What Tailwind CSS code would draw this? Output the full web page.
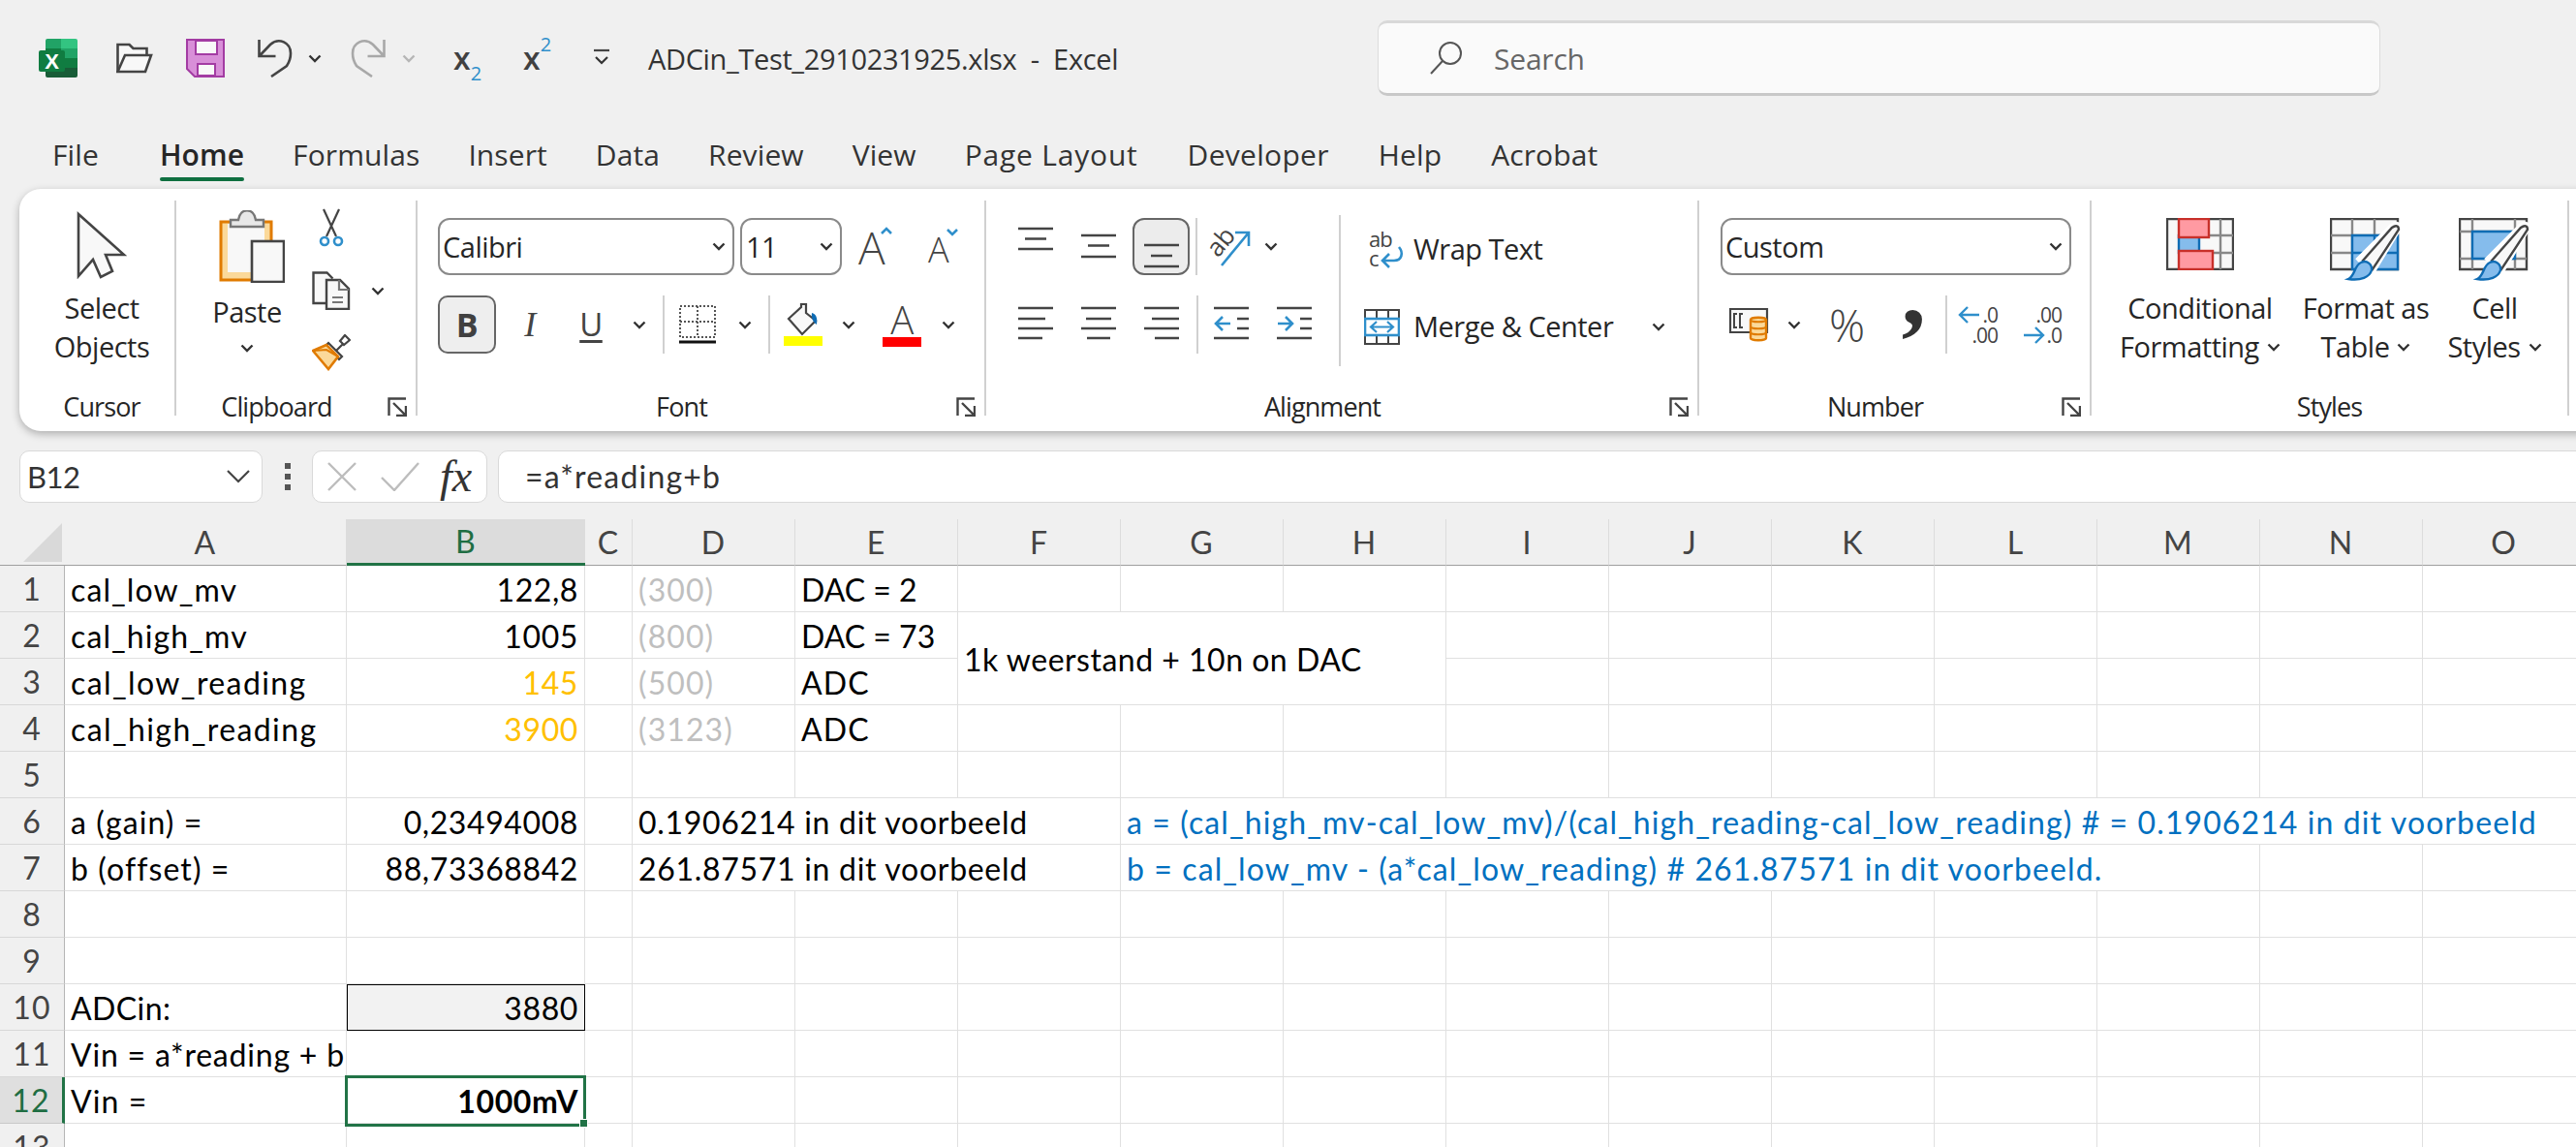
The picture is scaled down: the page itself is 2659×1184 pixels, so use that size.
<!DOCTYPE html>
<html lang="en">
<head>
  <meta charset="UTF-8">
  <title>ADCin_Test_2910231925.xlsx - Excel</title>
  <script src="https://cdn.jsdelivr.net/npm/@tailwindcss/browser@4"></script>
</head>
<body class="bg-[#f0f0f0]">

  <svg class="hidden">
    <symbol id="chev" viewBox="0 0 14 9"><path d="M1.5 1.5 7 7l5.5-5.5" fill="none" stroke="#333" stroke-width="2.4"/></symbol>
    <symbol id="launch" viewBox="0 0 20 20"><path d="M1.5 19V1.5H19M6 6l13 13M19 9v10H9" fill="none" stroke="#444" stroke-width="2.4"/></symbol>
  </svg>

  <div class="w-[2659px] h-[1184px] overflow-hidden flex flex-col bg-[#f0f0f0] text-[#262626] font-['Open_Sans',sans-serif]">

    <!-- Title bar -->
    <div class="h-[120px] shrink-0 flex items-center pl-[40px]">
      <svg class="w-[40px] h-[40px] overflow-visible" viewBox="0 0 40 40">
        <path d="M9 0h14v10H7V2a2 2 0 0 1 2-2z" fill="#21a366"/>
        <path d="M23 0h15a2 2 0 0 1 2 2v9H23z" fill="#33c481"/>
        <rect x="7" y="10" width="16" height="10" fill="#107c41"/>
        <rect x="23" y="10" width="17" height="10" fill="#21a366"/>
        <rect x="7" y="20" width="16" height="10" fill="#185c37"/>
        <rect x="23" y="20" width="17" height="10" fill="#107c41"/>
        <path d="M7 30h33v8a2 2 0 0 1-2 2H9a2 2 0 0 1-2-2z" fill="#185c37"/>
        <rect x="0" y="12" width="27" height="22" rx="2" fill="#107c41"/>
        <text x="13.5" y="31" text-anchor="middle" font-family="Liberation Sans" font-weight="700" font-size="22" fill="#fff">X</text>
      </svg>
      <svg class="ml-[40px] w-[38px] h-[32px]" viewBox="0 0 38 32">
        <path d="M1.5 30V2h12l4 4h14v7" fill="#f8f8f8" stroke="#444" stroke-width="2.6"/>
        <path d="M1.5 30 9 13h27l-6 17z" fill="#f8f8f8" stroke="#444" stroke-width="2.6"/>
      </svg>
      <svg class="ml-[34px] w-[40px] h-[40px]" viewBox="0 0 40 40">
        <path d="M1 1h38v38H9l-8-8z" fill="#d88fd8" stroke="#a33ca3" stroke-width="2"/>
        <rect x="10" y="2" width="22" height="14" fill="#f8f8f8" stroke="#a33ca3" stroke-width="2"/>
        <rect x="12" y="26" width="18" height="12" fill="#f8f8f8" stroke="#a33ca3" stroke-width="2"/>
      </svg>
      <svg class="ml-[34px] w-[36px] h-[40px]" viewBox="0 0 36 40">
        <path d="M1.500 1v17h17M1.500 18 13 6c9-8 21-2 21 9 0 6-2 10-4 13L14 39" fill="none" stroke="#444" stroke-width="2.6"/>
      </svg>
      <svg class="ml-[16px] w-[14px] h-[9px]"><use href="#chev"/></svg>
      <svg class="ml-[30px] w-[36px] h-[40px]" viewBox="0 0 36 40">
        <path d="M34.500 1v17h-17M34.500 18 23 6C14-2 2 4 2 15c0 6 2 10 4 13l16 11" fill="none" stroke="#a8a8a8" stroke-width="2.6"/>
      </svg>
      <svg class="ml-[17px] w-[14px] h-[9px] opacity-30"><use href="#chev"/></svg>
      <div class="ml-[39px] w-[27px] h-[40px] flex items-center text-[32px] font-semibold text-[#404040] leading-none">x<span class="text-[20px] text-[#2f8fcb] font-normal self-end leading-none mb-[-6px]">2</span></div>
      <div class="ml-[45px] w-[27px] h-[40px] flex items-center text-[32px] font-semibold text-[#404040] leading-none">x<span class="text-[20px] text-[#2f8fcb] font-normal self-start leading-none mt-[-4px]">2</span></div>
      <svg class="ml-[44px] w-[20px] h-[20px]" viewBox="0 0 20 20"><path d="M2 2h16" stroke="#444" stroke-width="2.2"/><path d="M4 9l6 6 6-6" fill="none" stroke="#333" stroke-width="2.2"/></svg>
      <div class="ml-[38px] mt-[2px] w-[520px] shrink-0 text-[29px] tracking-[-0.35px] whitespace-pre text-[#333]">ADCin_Test_2910231925.xlsx  -  Excel</div>
      <div class="ml-[233px] w-[1035px] shrink-0 h-[78px] flex items-center bg-[#fafafa] rounded-[10px] border border-[#dcdcdc] border-b-[3px] border-b-[#c8c8c8] border-t-[3px] border-t-[#d8d8d8]">
        <svg class="ml-[52px] w-[36px] h-[36px]" viewBox="0 0 36 36"><circle cx="22" cy="13" r="11" fill="none" stroke="#555" stroke-width="2"/><path d="M14 21 2 34" stroke="#555" stroke-width="2"/></svg>
        <span class="ml-[31px] text-[30px] tracking-[-0.2px] text-[#666]">Search</span>
      </div>
    </div>

    <!-- Tabs -->
    <div class="h-[75px] shrink-0 flex items-start pt-[18px] pl-[54px] gap-[50px] text-[30px] tracking-[0.1px] leading-[44px] text-[#333]">
      <span class="mr-[13px]">File</span>
      <span class="flex flex-col font-semibold text-[#262626]">Home<span class="h-[4px] mt-[1px] rounded-full bg-[#0f6f40]"></span></span>
      <span>Formulas</span>
      <span>Insert</span>
      <span>Data</span>
      <span>Review</span>
      <span>View</span>
      <span class="tracking-[0.8px]">Page Layout</span>
      <span class="ml-[1px] tracking-[0.3px]">Developer</span>
      <span class="ml-[1px]">Help</span>
      <span class="ml-[1px]">Acrobat</span>
    </div>

    <!-- Ribbon -->
    <div class="ml-[20px] w-[2680px] h-[250px] shrink-0 flex items-start bg-white rounded-[22px] shadow-[0_3px_8px_rgba(0,0,0,0.28)] text-[29px] tracking-[-0.5px] text-[#262626]">

      <!-- Cursor -->
      <div class="w-[162px] h-[222px] mt-[12px] shrink-0 flex flex-col border-r-2 border-[#d0d0d0]">
        <div class="h-[195px] shrink-0 pl-[10px] flex flex-col items-center leading-[40px]">
          <svg class="mt-[11px] w-[52px] h-[70px]" viewBox="0 0 52 70">
            <path d="M2 3 49 45H30l7 17-12 6-8-18L2 67z" fill="#f8f8f8" stroke="#444" stroke-width="2.6"/>
          </svg>
          <span class="mt-[10px]">Select</span>
          <span>Objects</span>
        </div>
        <div class="h-[36px] shrink-0 pl-[10px] text-center text-[27px] tracking-[-0.9px] leading-[36px]">Cursor</div>
      </div>

      <!-- Clipboard -->
      <div class="w-[249px] h-[222px] mt-[12px] shrink-0 flex flex-col border-r-2 border-[#d0d0d0]">
        <div class="h-[195px] shrink-0 flex">
          <div class="ml-[6px] w-[134px] flex flex-col items-center leading-[40px]">
            <svg class="mt-[10px] ml-[10px] w-[68px] h-[75px]" viewBox="0 0 68 75">
              <path d="M2 12h52v60H2z" fill="#fbd99a" stroke="#e07b00" stroke-width="3"/>
              <rect x="9" y="14" width="38" height="50" fill="#f8f8f8"/>
              <path d="M12 17v-7h8c2-13 16-13 18 0h8v7z" fill="#e8e8e8" stroke="#777" stroke-width="2.4"/>
              <rect x="34" y="32" width="33" height="42" fill="#f8f8f8" stroke="#444" stroke-width="2.6"/>
            </svg>
            <span class="mt-[10px]">Paste</span>
            <svg class="mt-[13px] w-[14px] h-[9px]"><use href="#chev"/></svg>
          </div>
          <div class="flex flex-col mt-[8px]">
            <svg class="ml-[7px] w-[26px] h-[40px]" viewBox="0 0 26 40">
              <path d="M5 1l13 28M21 1 8 29" fill="none" stroke="#444" stroke-width="2.2"/>
              <circle cx="6" cy="34" r="4" fill="#fff" stroke="#2f8fcb" stroke-width="2.6"/><circle cx="20" cy="34" r="4" fill="#fff" stroke="#2f8fcb" stroke-width="2.6"/>
            </svg>
            <div class="mt-[25px] flex items-center">
              <svg class="w-[40px] h-[40px]" viewBox="0 0 40 40">
                <path d="M14 33H1.500V1.500h14l6 6" fill="#f8f8f8" stroke="#444" stroke-width="2.4"/>
                <path d="M15 9h14l9 9v21H15z" fill="#f8f8f8" stroke="#444" stroke-width="2.4"/>
                <path d="M28 9v10h10M21 27h11M21 32h11" fill="none" stroke="#777" stroke-width="2.2"/>
              </svg>
              <svg class="ml-[21px] w-[14px] h-[9px]"><use href="#chev"/></svg>
            </div>
            <svg class="mt-[25px] w-[40px] h-[38px]" viewBox="0 0 40 38">
              <path d="M25 17l7-7-3-3 5-6 5 5-6 5-3-3" fill="#fff" stroke="#444" stroke-width="2.2"/>
              <path d="M17 9l14 14-3 3L14 12z" fill="#fff" stroke="#444" stroke-width="2.2"/>
              <path d="M15 11 1 17l16 19 10-13z" fill="#fbd99a" stroke="#e07b00" stroke-width="2.6"/>
              <path d="M1 17l14-1 12 7" fill="none" stroke="#e07b00" stroke-width="2.2"/>
            </svg>
          </div>
        </div>
        <div class="h-[36px] shrink-0 flex text-[27px] tracking-[-0.9px] leading-[36px]">
          <span class="flex-1 text-center">Clipboard</span>
          <div class="w-[40px] pt-[8px] pl-[11px]"><svg class="w-[20px] h-[20px]"><use href="#launch"/></svg></div>
        </div>
      </div>

      <!-- Font -->
      <div class="w-[587px] h-[222px] mt-[12px] shrink-0 flex flex-col border-r-2 border-[#d0d0d0]">
        <div class="h-[195px] shrink-0 pl-[21px] pt-[18px]">
          <div class="flex items-center h-[59px]">
            <div class="w-[306px] h-full flex items-center justify-between pl-[3px] pr-[7px] border-2 border-[#8a8a8a] rounded-[12px]">Calibri<svg class="w-[14px] h-[9px]"><use href="#chev"/></svg></div>
            <div class="ml-[6px] w-[105px] h-full flex items-center justify-between pl-[4px] pr-[7px] border-2 border-[#8a8a8a] rounded-[12px]">11<svg class="w-[14px] h-[9px]"><use href="#chev"/></svg></div>
            <div class="ml-[17px] w-[38px] h-[42px] flex items-start">
              <span class="text-[46px] leading-[42px] text-[#444] font-light">A</span>
              <svg class="ml-[-4px] shrink-0 w-[12px] h-[8px]" viewBox="0 0 12 8"><path d="M1 7l5-5 5 5" fill="none" stroke="#2f8fcb" stroke-width="2.6"/></svg>
            </div>
            <div class="ml-[34px] w-[34px] h-[42px] flex items-end">
              <span class="text-[36px] leading-[36px] text-[#444] font-light">A</span>
              <svg class="ml-[-2px] mb-[32px] shrink-0 w-[12px] h-[8px]" viewBox="0 0 12 8"><path d="M1 1l5 5 5-5" fill="none" stroke="#2f8fcb" stroke-width="2.6"/></svg>
            </div>
          </div>
          <div class="flex items-center h-[60px] mt-[21px]">
            <div class="w-[60px] h-full flex items-center justify-center bg-[#eeeeee] border-2 border-[#666] rounded-[10px] text-[34px] font-bold text-[#404040]">B</div>
            <div class="w-[70px] text-center text-[36px] italic text-[#444] font-['Liberation_Serif',serif]">I</div>
            <div class="w-[56px] text-center text-[33px] text-[#444] underline underline-offset-[4px]">U</div>
            <svg class="ml-[15px] w-[14px] h-[9px]"><use href="#chev"/></svg>
            <div class="ml-[17px] w-[2px] h-full bg-[#d0d0d0]"></div>
            <svg class="ml-[15px] w-[38px] h-[40px]" viewBox="0 0 38 40">
              <path d="M1 1h36v32H1zM19 1v32M1 17h36" fill="none" stroke="#555" stroke-width="2" stroke-dasharray="2 2"/>
              <path d="M0 38h38" stroke="#111" stroke-width="3"/>
            </svg>
            <svg class="ml-[23px] w-[14px] h-[9px]"><use href="#chev"/></svg>
            <div class="ml-[17px] w-[2px] h-full bg-[#d0d0d0]"></div>
            <svg class="ml-[14px] w-[40px] h-[44px]" viewBox="0 0 40 44">
              <path d="M5 16 18 4V1h5v9l10 8-14 14z" fill="#f8f8f8" stroke="#444" stroke-width="2.2"/>
              <path d="M29 10c4 1 6 4 5 12-3-2-6-6-5-12z" fill="#0f6cb4"/>
              <rect x="0" y="34" width="40" height="10" fill="#ffff00"/>
            </svg>
            <svg class="ml-[20px] w-[14px] h-[9px]"><use href="#chev"/></svg>
            <div class="ml-[28px] w-[40px] h-[46px] flex flex-col items-center justify-end">
              <span class="text-[40px] leading-[36px] text-[#444] font-light">A</span>
              <span class="w-full h-[10px] bg-[#ff0000] shrink-0"></span>
            </div>
            <svg class="ml-[21px] w-[14px] h-[9px]"><use href="#chev"/></svg>
          </div>
        </div>
        <div class="h-[36px] shrink-0 flex text-[27px] tracking-[-0.9px] leading-[36px]">
          <span class="flex-1 text-center">Font</span>
          <div class="w-[40px] pt-[8px] pl-[11px]"><svg class="w-[20px] h-[20px]"><use href="#launch"/></svg></div>
        </div>
      </div>

      <!-- Alignment -->
      <div class="w-[736px] h-[222px] mt-[12px] shrink-0 flex flex-col border-r-2 border-[#d0d0d0]">
        <div class="h-[195px] shrink-0 flex">
          <div class="w-[364px] shrink-0 pl-[33px] pt-[18px]">
            <div class="flex items-center h-[59px]">
              <svg class="w-[36px] h-[59px]" viewBox="0 0 36 59"><path d="M0 11h36M7 21.500h22M0 32h36" stroke="#444" stroke-width="2.6"/></svg>
              <svg class="ml-[29px] w-[36px] h-[59px]" viewBox="0 0 36 59"><path d="M0 18h36M7 28.500h22M0 40h36" stroke="#444" stroke-width="2.6"/></svg>
              <div class="ml-[17px] w-[59px] h-full flex items-center justify-center bg-[#ececec] border-2 border-[#666] rounded-[12px]">
                <svg class="w-[36px] h-[55px]" viewBox="0 0 36 55"><path d="M0 26h36M7 37h22M0 48h36" stroke="#444" stroke-width="2.6"/></svg>
              </div>
              <div class="ml-[6px] w-[2px] h-full bg-[#d0d0d0]"></div>
              <svg class="ml-[14px] w-[41px] h-[40px] overflow-visible" viewBox="0 0 41 40">
                <text x="0" y="24" font-family="Open Sans" font-size="26" fill="#444" transform="rotate(-50 12 20)">ab</text>
                <path d="M11 39 39 5M25 5h14v14" fill="none" stroke="#2f8fcb" stroke-width="2.6"/>
              </svg>
              <svg class="ml-[14px] w-[14px] h-[9px]"><use href="#chev"/></svg>
            </div>
            <div class="flex items-center h-[60px] mt-[21px]">
              <svg class="w-[36px] h-[60px]" viewBox="0 0 36 60"><path d="M0 13h36M0 24h28M0 34h36M0 44h25" stroke="#444" stroke-width="2.6"/></svg>
              <svg class="ml-[29px] w-[36px] h-[60px]" viewBox="0 0 36 60"><path d="M0 13h36M5 24h26M0 34h36M6 44h24" stroke="#444" stroke-width="2.6"/></svg>
              <svg class="ml-[29px] w-[36px] h-[60px]" viewBox="0 0 36 60"><path d="M0 13h36M8 24h28M0 34h36M11 44h25" stroke="#444" stroke-width="2.6"/></svg>
              <div class="ml-[18px] w-[2px] h-full bg-[#d0d0d0]"></div>
              <svg class="ml-[16px] w-[36px] h-[60px]" viewBox="0 0 36 60"><path d="M0 13h36M24 24h12M24 34h12M0 44h36" stroke="#444" stroke-width="2.6"/><path d="M17 29H2M9 22l-7 7 7 7" fill="none" stroke="#2f8fcb" stroke-width="2.6"/></svg>
              <svg class="ml-[29px] w-[36px] h-[60px]" viewBox="0 0 36 60"><path d="M0 13h36M24 24h12M24 34h12M0 44h36" stroke="#444" stroke-width="2.6"/><path d="M1 29h15M9 22l7 7-7 7" fill="none" stroke="#2f8fcb" stroke-width="2.6"/></svg>
            </div>
          </div>
          <div class="mt-[15px] w-[2px] h-[156px] bg-[#d0d0d0] shrink-0"></div>
          <div class="pt-[20px] pl-[24px]">
            <div class="h-[59px] flex items-center">
              <svg class="ml-[5px] w-[36px] h-[40px] overflow-visible" viewBox="0 0 36 40">
                <text x="0" y="18" font-family="Open Sans" font-size="22" letter-spacing="-1" fill="#444">ab</text>
                <text x="0" y="38" font-family="Open Sans" font-size="22" fill="#444">c</text>
                <path d="M31 18c5 6 3 14-5 14H15M21 25l-7 7 7 7" fill="none" stroke="#2f8fcb" stroke-width="2.6"/>
              </svg>
              <span class="ml-[10px] whitespace-nowrap">Wrap Text</span>
            </div>
            <div class="h-[60px] mt-[21px] flex items-center">
              <svg class="w-[37px] h-[37px]" viewBox="0 0 37 37">
                <path d="M1 1h35v35H1zM13 1v9M25 1v9M13 27v9M25 27v9" fill="none" stroke="#444" stroke-width="2"/>
                <rect x="1" y="10" width="35" height="17" fill="#fff" stroke="#2f8fcb" stroke-width="2.6"/>
                <path d="M7 18.500h23M13 13l-6 5.500 6 5.500M24 13l6 5.500-6 5.500" fill="none" stroke="#2f8fcb" stroke-width="2.2"/>
              </svg>
              <span class="ml-[14px] w-[214px] whitespace-nowrap">Merge &amp; Center</span>
              <svg class="ml-[32px] w-[14px] h-[9px]"><use href="#chev"/></svg>
            </div>
          </div>
        </div>
        <div class="h-[36px] shrink-0 flex text-[27px] tracking-[-0.9px] leading-[36px]">
          <span class="flex-1 text-center">Alignment</span>
          <div class="w-[40px] pt-[8px] pl-[11px]"><svg class="w-[20px] h-[20px]"><use href="#launch"/></svg></div>
        </div>
      </div>

      <!-- Number -->
      <div class="w-[405px] h-[222px] mt-[12px] shrink-0 flex flex-col border-r-2 border-[#d0d0d0]">
        <div class="h-[195px] shrink-0 pt-[18px]">
          <div class="ml-[22px] w-[362px] h-[59px] flex items-center justify-between pl-[3px] pr-[7px] border-2 border-[#8a8a8a] rounded-[12px]">Custom<svg class="w-[14px] h-[9px]"><use href="#chev"/></svg></div>
          <div class="flex items-center h-[60px] mt-[21px]">
            <svg class="ml-[31px] w-[41px] h-[36px]" viewBox="0 0 41 36">
              <path d="M1 2h38v24H1z" fill="#f8f8f8" stroke="#444" stroke-width="2.2"/>
              <path d="M8 7h-3v14h3M14 7h-3v14h3" fill="none" stroke="#444" stroke-width="2"/>
              <path d="M22 13c0-3 16-3 16 0v19c0 3-16 3-16 0z" fill="#fbd99a" stroke="#e07b00" stroke-width="2.4"/>
              <path d="M22 13c0 3 16 3 16 0M22 20c0 3 16 3 16 0M22 26c0 3 16 3 16 0" fill="none" stroke="#e07b00" stroke-width="2.2"/>
            </svg>
            <svg class="ml-[19px] w-[14px] h-[9px]"><use href="#chev"/></svg>
            <span class="ml-[29px] w-[37px] flex justify-center text-[46px] tracking-normal text-[#444] font-light">%</span>
            <svg class="ml-[35px] w-[30px] h-[50px] overflow-visible" viewBox="0 0 30 50"><text x="15" y="25" text-anchor="middle" font-family="Liberation Serif" font-weight="700" font-size="100" fill="#333">,</text></svg>
            <div class="ml-[18px] w-[2px] h-full bg-[#d0d0d0]"></div>
            <svg class="ml-[12px] w-[40px] h-[42px] overflow-visible" viewBox="0 0 40 42">
              <text x="40" y="19" text-anchor="end" font-family="Open Sans" font-size="21" letter-spacing="-1" fill="#444">.0</text>
              <text x="40" y="40" text-anchor="end" font-family="Open Sans" font-size="21" letter-spacing="-1" fill="#444">.00</text>
              <path d="M1 11h20M9 3l-8 8 8 8" fill="none" stroke="#2f8fcb" stroke-width="2.4" />
            </svg>
            <svg class="ml-[26px] w-[40px] h-[42px] overflow-visible" viewBox="0 0 40 42">
              <text x="40" y="19" text-anchor="end" font-family="Open Sans" font-size="21" letter-spacing="-1" fill="#444">.00</text>
              <text x="40" y="40" text-anchor="end" font-family="Open Sans" font-size="21" letter-spacing="-1" fill="#444">.0</text>
              <path d="M1 32h20M13 24l8 8-8 8" fill="none" stroke="#2f8fcb" stroke-width="2.4"/>
            </svg>
          </div>
        </div>
        <div class="h-[36px] shrink-0 flex text-[27px] tracking-[-0.9px] leading-[36px]">
          <span class="flex-1 text-center">Number</span>
          <div class="w-[40px] pt-[8px] pl-[11px]"><svg class="w-[20px] h-[20px]"><use href="#launch"/></svg></div>
        </div>
      </div>

      <!-- Styles -->
      <div class="w-[493px] h-[222px] mt-[12px] shrink-0 flex flex-col border-r-2 border-[#d0d0d0]">
        <div class="h-[195px] shrink-0 flex pl-[27px] leading-[40px] pt-[18px]">
          <div class="w-[170px] flex flex-col items-center whitespace-nowrap">
            <div class="h-[73px]">
              <svg class="w-[70px] h-[54px]" viewBox="0 0 70 54">
                <path d="M1 1h68v52H1z" fill="#f8f8f8" stroke="#444" stroke-width="2.4"/>
                <path d="M13 18h56M13 36h56M56 1v52" stroke="#888" stroke-width="2.4"/>
                <rect x="13" y="18" width="21" height="18" fill="#85bcec" stroke="#0f6cb4" stroke-width="2.4"/>
                <rect x="13" y="1" width="31" height="19" fill="#ff9aa2" stroke="#c8302a" stroke-width="2.4"/>
                <rect x="13" y="34" width="35" height="19" fill="#ff9aa2" stroke="#c8302a" stroke-width="2.4"/>
              </svg>
            </div>
            <span>Conditional</span>
            <span class="flex items-center gap-[8px]">Formatting<svg class="w-[14px] h-[9px]"><use href="#chev"/></svg></span>
          </div>
          <div class="w-[172px] flex flex-col items-center whitespace-nowrap">
            <div class="h-[73px]">
              <svg class="w-[74px] h-[66px]" viewBox="0 0 74 66">
                <path d="M1 1h69v52H1z" fill="#f8f8f8" stroke="#444" stroke-width="2.4"/>
                <path d="M1 18h69M1 36h69M23 1v52M46 1v52" stroke="#888" stroke-width="2.4"/>
                <path d="M23 18h47v35H23z" fill="#85bcec" stroke="#0f6cb4" stroke-width="2.4"/>
                <path d="M46 18v35M23 36h47" stroke="#0f6cb4" stroke-width="2.4"/>
                <path d="M28 44 64 8c4-3 8-2 8 2L44 56" fill="#fff" stroke="#fff" stroke-width="5"/>
                <path d="M34 44 64 10c4-3 7-2 7 2L44 53z" fill="#f8f8f8" stroke="#444" stroke-width="2.4"/>
                <path d="M32 46c6-3 12 2 11 8-2 7-11 11-24 9 7-3 6-14 13-17z" fill="#85bcec" stroke="#0f6cb4" stroke-width="2.4"/>
              </svg>
            </div>
            <span>Format as</span>
            <span class="flex items-center gap-[8px]">Table<svg class="w-[14px] h-[9px]"><use href="#chev"/></svg></span>
          </div>
          <div class="w-[94px] flex flex-col items-center whitespace-nowrap">
            <div class="h-[73px]">
              <svg class="w-[74px] h-[66px]" viewBox="0 0 74 66">
                <path d="M1 1h69v52H1z" fill="#f8f8f8" stroke="#444" stroke-width="2.4"/>
                <path d="M1 14h69M1 42h69M14 1v52M58 1v52" stroke="#888" stroke-width="2.4"/>
                <path d="M14 14h44v28H14z" fill="#85bcec" stroke="#0f6cb4" stroke-width="2.4"/>
                <path d="M28 44 64 8c4-3 8-2 8 2L44 56" fill="#fff" stroke="#fff" stroke-width="5"/>
                <path d="M34 44 64 10c4-3 7-2 7 2L44 53z" fill="#f8f8f8" stroke="#444" stroke-width="2.4"/>
                <path d="M32 46c6-3 12 2 11 8-2 7-11 11-24 9 7-3 6-14 13-17z" fill="#85bcec" stroke="#0f6cb4" stroke-width="2.4"/>
              </svg>
            </div>
            <span>Cell</span>
            <span class="flex items-center gap-[8px]">Styles<svg class="w-[14px] h-[9px]"><use href="#chev"/></svg></span>
          </div>
        </div>
        <div class="h-[36px] shrink-0 text-center text-[27px] tracking-[-0.9px] leading-[36px]">Styles</div>
      </div>
    </div>

    <!-- Formula bar -->
    <div class="h-[91px] shrink-0 pt-[20px] pb-[17px] flex items-stretch pl-[20px] text-[32px]">
      <div class="w-[251px] shrink-0 flex items-center justify-between pl-[7px] pr-[12px] bg-white border border-[#d9d9d9] rounded-[10px] font-['Lato',sans-serif] text-[31px] tracking-[-0.5px] text-[#333]">
        B12
        <svg class="w-[24px] h-[14px]" viewBox="0 0 24 14"><path d="M1 1l11 11L23 1" fill="none" stroke="#444" stroke-width="2.2"/></svg>
      </div>
      <div class="w-[51px] shrink-0 flex flex-col items-center justify-center gap-[5px]">
        <span class="w-[6px] h-[6px] bg-[#555]"></span><span class="w-[6px] h-[6px] bg-[#555]"></span><span class="w-[6px] h-[6px] bg-[#555]"></span>
      </div>
      <div class="w-[181px] shrink-0 flex items-center bg-white border border-[#d9d9d9] rounded-[10px]">
        <svg class="ml-[15px] w-[30px] h-[30px]" viewBox="0 0 30 30"><path d="M1 1l28 28M29 1 1 29" stroke="#bdbdbd" stroke-width="2.4"/></svg>
        <svg class="ml-[25px] w-[40px] h-[30px]" viewBox="0 0 40 30"><path d="M1 16l13 13L39 1" fill="none" stroke="#bdbdbd" stroke-width="2.4"/></svg>
        <span class="ml-[21px] text-[46px] leading-none italic text-[#333] font-['Liberation_Serif',serif]">fx</span>
      </div>
      <div class="ml-[11px] flex-1 mr-[-20px] flex items-center pl-[27px] bg-white border border-[#d9d9d9] rounded-[10px] font-['Lato',sans-serif] tracking-[1.2px] text-[#333]">=a*reading+b</div>
    </div>

    <!-- Sheet -->
    <div id="sheet" class="grid grid-cols-[67px_291px_246px_49px_repeat(12,168px)] auto-rows-[48px] text-[32px] tracking-[1.1px] font-['Lato',sans-serif] text-black"></div>
  </div>

  <script>
    const letters = ['A','B','C','D','E','F','G','H','I','J','K','L','M','N','O'];

    const base = 'flex items-center whitespace-nowrap bg-white px-[6px] pt-[2px] border-r border-b border-[#e0e0e0]';
    const gray = 'text-[#bfbfbf]';
    const gold = 'text-[#ffc000]';
    const blue = 'text-[#0070c0]';
    const num = 'justify-end tracking-[0.6px]';

    const cells = {
      A1: ['cal_low_mv'], B1: ['122,8', num], D1: ['(300)', gray], E1: ['DAC = 2', 'tracking-[0px]'],
      A2: ['cal_high_mv'], B2: ['1005', num], D2: ['(800)', gray], E2: ['DAC = 73', 'tracking-[0px]'],
      F2: ['1k weerstand + 10n on DAC', 'col-span-3 row-span-2 tracking-[0.5px]'],
      A3: ['cal_low_reading', 'tracking-[1.4px]'], B3: ['145', num + ' ' + gold], D3: ['(500)', gray], E3: ['ADC'],
      A4: ['cal_high_reading', 'tracking-[1.4px]'], B4: ['3900', num + ' ' + gold], D4: ['(3123)', gray], E4: ['ADC'],
      A6: ['a (gain) ='], B6: ['0,23494008', num],
      D6: ['0.1906214 in dit voorbeeld', 'col-span-3 tracking-[0.7px]'],
      G6: ['a = (cal_high_mv-cal_low_mv)/(cal_high_reading-cal_low_reading) # = 0.1906214 in dit voorbeeld', 'col-span-9 ' + blue],
      A7: ['b (offset) ='], B7: ['88,73368842', num],
      D7: ['261.87571 in dit voorbeeld', 'col-span-3 tracking-[0.7px]'],
      G7: ['b = cal_low_mv - (a*cal_low_reading) # 261.87571 in dit voorbeeld.', 'col-span-7 ' + blue],
      A10: ['ADCin:', 'tracking-[0.4px]'], B10: ['3880', num + ' bg-[#f2f2f2]! border! border-black!'],
      A11: ['Vin = a*reading + b', 'tracking-[0.8px]'],
      A12: ['Vin ='], B12: ['1000mV', num + ' font-bold relative']
    };

    // cells covered by a merge or by long text
    const covered = ['G2','H2','F3','G3','H3','E6','F6','H6','I6','J6','K6','L6','M6','N6','O6','E7','F7','H7','I7','J7','K7','L7','M7'];

    const sheet = document.getElementById('sheet');

    function add(cls, text) {
      const d = document.createElement('div');
      d.className = cls;
      if (text) d.textContent = text;
      sheet.appendChild(d);
      return d;
    }

    // column headers
    const corner = add('flex items-end justify-end pr-[3px] pb-[3px] border-b border-[#9f9f9f]');
    corner.innerHTML = '<svg class="w-[40px] h-[40px]" viewBox="0 0 40 40"><path d="M0 40 40 0v40z" fill="#d9d9d9"/></svg>';
    letters.forEach(l => {
      if (l === 'B') {
        add('flex items-center justify-center bg-[#dcdcdc] text-[#1f6e43] border-b-[3px] border-[#217346]', l);
      } else {
        add('flex items-center justify-center text-[#444] border-r border-b border-r-[#dcdcdc] border-b-[#9f9f9f]', l);
      }
    });

    for (let r = 1; r <= 13; r++) {
      if (r === 12) {
        add('flex items-center justify-center bg-[#dfdfdf] text-[#1f6e43] border-b border-r-[3px] border-b-[#c8c8c8] border-r-[#217346]', r);
      } else {
        add('flex items-center justify-center text-[#444] border-b border-r border-b-[#d8d8d8] border-r-[#b5b5b5]', r);
      }
      letters.forEach(l => {
        const id = l + r;
        if (covered.includes(id)) return;
        const c = cells[id] || [''];
        const d = add(base + ' ' + (c[1] || ''), c[0]);
        if (id === 'B12') {
          d.insertAdjacentHTML('beforeend', '<div class="absolute left-[-2px] top-[-2px] right-[-2px] bottom-[-4px] border-[3px] border-[#217346]"><div class="absolute right-[-5px] bottom-[-4px] w-[9px] h-[9px] bg-[#217346] border border-white"></div></div>');
        }
      });
    }
  </script>
</body>
</html>
